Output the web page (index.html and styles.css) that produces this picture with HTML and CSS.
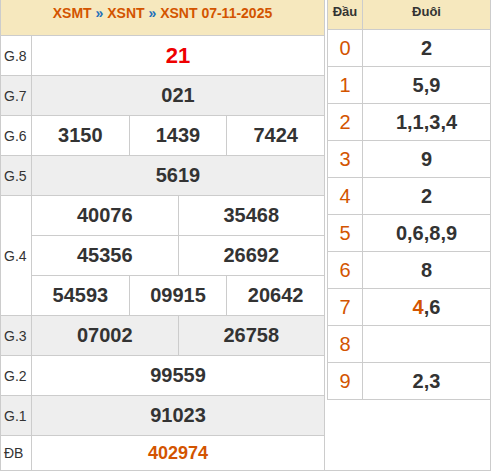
FILE: index.html
```html
<!DOCTYPE html>
<html>
<head>
<meta charset="utf-8">
<link rel="stylesheet" href="styles.css">
</head>
<body>
<div class="wrap">
  <div class="kq">
    <div class="kq-head">XSMT <span class="sep">»</span> XSNT <span class="sep">»</span> XSNT 07-11-2025</div>
    <div class="row"><div class="lbl">G.8</div><div class="vals"><div class="v red">21</div></div></div>
    <div class="row alt"><div class="lbl">G.7</div><div class="vals"><div class="v">021</div></div></div>
    <div class="row"><div class="lbl">G.6</div><div class="vals"><div class="v">3150</div><div class="v">1439</div><div class="v">7424</div></div></div>
    <div class="row alt"><div class="lbl">G.5</div><div class="vals"><div class="v">5619</div></div></div>
    <div class="row tall"><div class="lbl">G.4</div>
      <div class="vals stack">
        <div class="sub"><div class="v">40076</div><div class="v">35468</div></div>
        <div class="sub"><div class="v">45356</div><div class="v">26692</div></div>
        <div class="sub"><div class="v">54593</div><div class="v">09915</div><div class="v">20642</div></div>
      </div>
    </div>
    <div class="row alt"><div class="lbl">G.3</div><div class="vals"><div class="v">07002</div><div class="v">26758</div></div></div>
    <div class="row"><div class="lbl">G.2</div><div class="vals"><div class="v">99559</div></div></div>
    <div class="row alt"><div class="lbl">G.1</div><div class="vals"><div class="v">91023</div></div></div>
    <div class="row last"><div class="lbl">ĐB</div><div class="vals"><div class="v db">402974</div></div></div>
  </div>
  <div class="lt">
    <div class="lt-row lt-head"><div class="dau">Đầu</div><div class="duoi">Đuôi</div></div>
    <div class="lt-row"><div class="dau">0</div><div class="duoi">2</div></div>
    <div class="lt-row"><div class="dau">1</div><div class="duoi">5,9</div></div>
    <div class="lt-row"><div class="dau">2</div><div class="duoi">1,1,3,4</div></div>
    <div class="lt-row"><div class="dau">3</div><div class="duoi">9</div></div>
    <div class="lt-row"><div class="dau">4</div><div class="duoi">2</div></div>
    <div class="lt-row"><div class="dau">5</div><div class="duoi">0,6,8,9</div></div>
    <div class="lt-row"><div class="dau">6</div><div class="duoi">8</div></div>
    <div class="lt-row"><div class="dau">7</div><div class="duoi"><span class="hl">4</span>,6</div></div>
    <div class="lt-row"><div class="dau">8</div><div class="duoi"></div></div>
    <div class="lt-row"><div class="dau">9</div><div class="duoi">2,3</div></div>
  </div>
</div>
</body>
</html>
```

FILE: styles.css
```css
html, body {
  margin: 0;
  padding: 0;
  background: #fff;
}
body {
  font-family: "Liberation Sans", Arial, sans-serif;
  color: #333;
}
.wrap {
  display: flex;
  align-items: flex-start;
  width: 491px;
  height: 471px;
  box-sizing: border-box;
  border-left: 1px solid #ccc;
  border-right: 1px solid #ccc;
  border-bottom: 1px solid #ccc;
  overflow: hidden;
}
.kq {
  width: 324px;
  box-sizing: border-box;
  border-right: 1px solid #ccc;
  align-self: stretch;
}
.kq-head {
  height: 36px;
  box-sizing: border-box;
  border-bottom: 1px solid #ccc;
  background: #f6e8be;
  text-align: center;
  line-height: 27px;
  font-size: 14px;
  font-weight: bold;
  color: #d35400;
}
.sep {
  color: #1e6fba;
}
.row {
  display: flex;
  height: 40px;
  box-sizing: border-box;
  border-bottom: 1px solid #ccc;
  background: #fff;
}
.row.alt {
  background: #eeeeee;
}
.row.tall {
  height: 120px;
}
.row.last {
  height: 34px;
  border-bottom: none;
}
.lbl {
  width: 31px;
  flex: none;
  box-sizing: border-box;
  border-right: 1px solid #ccc;
  padding-left: 3px;
  display: flex;
  align-items: center;
  font-size: 14px;
  color: #333;
}
.vals {
  flex: 1;
  display: flex;
}
.vals.stack {
  flex-direction: column;
}
.sub {
  flex: 1;
  display: flex;
  border-bottom: 1px solid #ccc;
}
.sub:last-child {
  border-bottom: none;
}
.v {
  flex: 1;
  display: flex;
  align-items: center;
  justify-content: center;
  font-size: 20px;
  font-weight: bold;
  color: #333;
}
.v + .v {
  border-left: 1px solid #ccc;
}
.v.red {
  color: #ee0000;
  font-size: 22px;
}
.v.db {
  color: #d35400;
  font-size: 18px;
}
.lt {
  margin-left: 2px;
  width: 163px;
  box-sizing: border-box;
  border-left: 1px solid #ccc;
}
.lt-row {
  display: flex;
  height: 37px;
  box-sizing: border-box;
  border-bottom: 1px solid #ccc;
}
.lt-head {
  height: 30px;
  background: #f6e8be;
}
.dau {
  width: 35px;
  flex: none;
  box-sizing: border-box;
  border-right: 1px solid #ccc;
  display: flex;
  align-items: center;
  justify-content: center;
  font-size: 20px;
  color: #d35400;
}
.duoi {
  flex: 1;
  display: flex;
  align-items: center;
  justify-content: center;
  font-size: 20px;
  font-weight: bold;
  color: #333;
}
.lt-head .dau,
.lt-head .duoi {
  font-size: 13px;
  font-weight: bold;
  color: #333;
  align-items: flex-start;
  line-height: 24px;
}
.hl {
  color: #d35400;
}
```
